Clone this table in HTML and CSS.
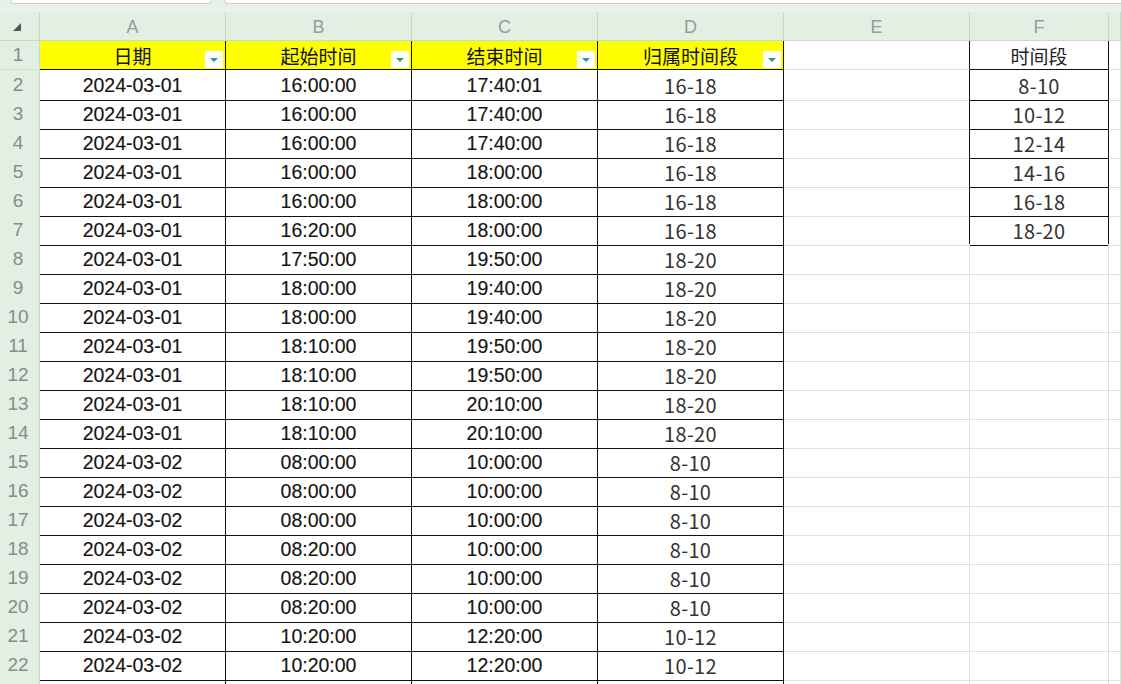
FILE: index.html
```html
<!DOCTYPE html>
<html lang="zh-CN">
<head>
	<meta charset="UTF-8">
	<title>时间段</title>
	<link rel="stylesheet" href="styles.css">
</head>
<body>
	<div id="sheet">
		<div class="top">
			<div class="tab"></div>
			<div class="tab wide"></div>
		</div>
		<div class="row head">
			<div class="corner"><svg width="8" height="8" viewBox="0 0 8 8"><path d="M8 0 L8 8 L0 8 Z" fill="#555"/></svg></div>
			<div class="col">A</div>
			<div class="col">B</div>
			<div class="col">C</div>
			<div class="col">D</div>
			<div class="col">E</div>
			<div class="col">F</div>
			<div class="col"></div>
		</div>
		<div class="row">
			<div class="rh">1</div>
			<div class="c k y">日期<span class="flt"></span></div>
			<div class="c k y">起始时间<span class="flt"></span></div>
			<div class="c k y">结束时间<span class="flt"></span></div>
			<div class="c k y">归属时间段<span class="flt"></span></div>
			<div class="c ek"></div>
			<div class="c k cn">时间段</div>
			<div class="c"></div>
		</div>
		<div class="row">
			<div class="rh">2</div>
			<div class="c k n">2024-03-01</div>
			<div class="c k n">16:00:00</div>
			<div class="c k n">17:40:01</div>
			<div class="c k g">16-18</div>
			<div class="c ek"></div>
			<div class="c k g">8-10</div>
			<div class="c"></div>
		</div>
		<div class="row">
			<div class="rh">3</div>
			<div class="c k n">2024-03-01</div>
			<div class="c k n">16:00:00</div>
			<div class="c k n">17:40:00</div>
			<div class="c k g">16-18</div>
			<div class="c ek"></div>
			<div class="c k g">10-12</div>
			<div class="c"></div>
		</div>
		<div class="row">
			<div class="rh">4</div>
			<div class="c k n">2024-03-01</div>
			<div class="c k n">16:00:00</div>
			<div class="c k n">17:40:00</div>
			<div class="c k g">16-18</div>
			<div class="c ek"></div>
			<div class="c k g">12-14</div>
			<div class="c"></div>
		</div>
		<div class="row">
			<div class="rh">5</div>
			<div class="c k n">2024-03-01</div>
			<div class="c k n">16:00:00</div>
			<div class="c k n">18:00:00</div>
			<div class="c k g">16-18</div>
			<div class="c ek"></div>
			<div class="c k g">14-16</div>
			<div class="c"></div>
		</div>
		<div class="row">
			<div class="rh">6</div>
			<div class="c k n">2024-03-01</div>
			<div class="c k n">16:00:00</div>
			<div class="c k n">18:00:00</div>
			<div class="c k g">16-18</div>
			<div class="c ek"></div>
			<div class="c k g">16-18</div>
			<div class="c"></div>
		</div>
		<div class="row">
			<div class="rh">7</div>
			<div class="c k n">2024-03-01</div>
			<div class="c k n">16:20:00</div>
			<div class="c k n">18:00:00</div>
			<div class="c k g">16-18</div>
			<div class="c ek"></div>
			<div class="c k g">18-20</div>
			<div class="c"></div>
		</div>
		<div class="row">
			<div class="rh">8</div>
			<div class="c k n">2024-03-01</div>
			<div class="c k n">17:50:00</div>
			<div class="c k n">19:50:00</div>
			<div class="c k g">18-20</div>
			<div class="c"></div>
			<div class="c"></div>
			<div class="c"></div>
		</div>
		<div class="row">
			<div class="rh">9</div>
			<div class="c k n">2024-03-01</div>
			<div class="c k n">18:00:00</div>
			<div class="c k n">19:40:00</div>
			<div class="c k g">18-20</div>
			<div class="c"></div>
			<div class="c"></div>
			<div class="c"></div>
		</div>
		<div class="row">
			<div class="rh">10</div>
			<div class="c k n">2024-03-01</div>
			<div class="c k n">18:00:00</div>
			<div class="c k n">19:40:00</div>
			<div class="c k g">18-20</div>
			<div class="c"></div>
			<div class="c"></div>
			<div class="c"></div>
		</div>
		<div class="row">
			<div class="rh">11</div>
			<div class="c k n">2024-03-01</div>
			<div class="c k n">18:10:00</div>
			<div class="c k n">19:50:00</div>
			<div class="c k g">18-20</div>
			<div class="c"></div>
			<div class="c"></div>
			<div class="c"></div>
		</div>
		<div class="row">
			<div class="rh">12</div>
			<div class="c k n">2024-03-01</div>
			<div class="c k n">18:10:00</div>
			<div class="c k n">19:50:00</div>
			<div class="c k g">18-20</div>
			<div class="c"></div>
			<div class="c"></div>
			<div class="c"></div>
		</div>
		<div class="row">
			<div class="rh">13</div>
			<div class="c k n">2024-03-01</div>
			<div class="c k n">18:10:00</div>
			<div class="c k n">20:10:00</div>
			<div class="c k g">18-20</div>
			<div class="c"></div>
			<div class="c"></div>
			<div class="c"></div>
		</div>
		<div class="row">
			<div class="rh">14</div>
			<div class="c k n">2024-03-01</div>
			<div class="c k n">18:10:00</div>
			<div class="c k n">20:10:00</div>
			<div class="c k g">18-20</div>
			<div class="c"></div>
			<div class="c"></div>
			<div class="c"></div>
		</div>
		<div class="row">
			<div class="rh">15</div>
			<div class="c k n">2024-03-02</div>
			<div class="c k n">08:00:00</div>
			<div class="c k n">10:00:00</div>
			<div class="c k g">8-10</div>
			<div class="c"></div>
			<div class="c"></div>
			<div class="c"></div>
		</div>
		<div class="row">
			<div class="rh">16</div>
			<div class="c k n">2024-03-02</div>
			<div class="c k n">08:00:00</div>
			<div class="c k n">10:00:00</div>
			<div class="c k g">8-10</div>
			<div class="c"></div>
			<div class="c"></div>
			<div class="c"></div>
		</div>
		<div class="row">
			<div class="rh">17</div>
			<div class="c k n">2024-03-02</div>
			<div class="c k n">08:00:00</div>
			<div class="c k n">10:00:00</div>
			<div class="c k g">8-10</div>
			<div class="c"></div>
			<div class="c"></div>
			<div class="c"></div>
		</div>
		<div class="row">
			<div class="rh">18</div>
			<div class="c k n">2024-03-02</div>
			<div class="c k n">08:20:00</div>
			<div class="c k n">10:00:00</div>
			<div class="c k g">8-10</div>
			<div class="c"></div>
			<div class="c"></div>
			<div class="c"></div>
		</div>
		<div class="row">
			<div class="rh">19</div>
			<div class="c k n">2024-03-02</div>
			<div class="c k n">08:20:00</div>
			<div class="c k n">10:00:00</div>
			<div class="c k g">8-10</div>
			<div class="c"></div>
			<div class="c"></div>
			<div class="c"></div>
		</div>
		<div class="row">
			<div class="rh">20</div>
			<div class="c k n">2024-03-02</div>
			<div class="c k n">08:20:00</div>
			<div class="c k n">10:00:00</div>
			<div class="c k g">8-10</div>
			<div class="c"></div>
			<div class="c"></div>
			<div class="c"></div>
		</div>
		<div class="row">
			<div class="rh">21</div>
			<div class="c k n">2024-03-02</div>
			<div class="c k n">10:20:00</div>
			<div class="c k n">12:20:00</div>
			<div class="c k g">10-12</div>
			<div class="c"></div>
			<div class="c"></div>
			<div class="c"></div>
		</div>
		<div class="row">
			<div class="rh">22</div>
			<div class="c k n">2024-03-02</div>
			<div class="c k n">10:20:00</div>
			<div class="c k n">12:20:00</div>
			<div class="c k g">10-12</div>
			<div class="c"></div>
			<div class="c"></div>
			<div class="c"></div>
		</div>
		<div class="row">
			<div class="rh"></div>
			<div class="c k"></div>
			<div class="c k"></div>
			<div class="c k"></div>
			<div class="c k"></div>
			<div class="c"></div>
			<div class="c"></div>
			<div class="c"></div>
		</div>
	</div>
</body>
</html>
```

FILE: styles.css
```css
html,body{
	margin: 0;
	padding: 0;
	background: #fff;
	overflow: hidden;
}
#sheet{
	width: 1121px;
	height: 684px;
	overflow: hidden;
}
.top{
	height: 12px;
	background: #e9f2e9;
	display: flex;
	gap: 12px;
}
.tab{
	width: 200px;
	height: 3px;
	margin-left: 10px;
	background: #fff;
	border: 1px solid #c9cfc9;
	border-top: none;
	border-radius: 0 0 6px 6px;
}
.tab.wide{
	flex: 1;
	margin-left: 0;
	border-right: none;
	border-radius: 0 0 0 6px;
}
.row{
	display: grid;
	grid-template-columns: 40px 186px 186px 186px 186px 186px 139px 1fr;
	height: 29px;
}
.head{
	background: #e2efe2;
}
.corner{
	display: flex;
	align-items: flex-end;
	justify-content: center;
	padding-bottom: 9px;
	padding-right: 6px;
	box-sizing: border-box;
	border-right: 1px solid #c6dbc6;
	border-bottom: 1px solid #c6dbc6;
}
.col{
	border-right: 1px solid #c6dbc6;
	border-bottom: 1px solid #c6dbc6;
	display: flex;
	align-items: center;
	justify-content: center;
	font-family: "Liberation Sans", Arial, sans-serif;
	font-size: 18px;
	color: #9a9a9a;
	padding-top: 2px;
	box-sizing: border-box;
}
.rh{
	background: #e2efe2;
	border-right: 1px solid #c6dbc6;
	border-bottom: 1px solid #cfe2cf;
	display: flex;
	align-items: center;
	justify-content: center;
	padding-right: 3px;
	box-sizing: border-box;
	font-family: "Liberation Sans", Arial, sans-serif;
	font-size: 19px;
	color: #8a8a8a;
}
.c{
	position: relative;
	border-right: 1px solid #d6e7d6;
	border-bottom: 1px solid #d6e7d6;
	display: flex;
	align-items: center;
	justify-content: center;
	box-sizing: border-box;
	white-space: nowrap;
}
.c.k{
	border-right-color: #111;
	border-bottom-color: #111;
}
.c.ek{
	border-right-color: #111;
}
.y{
	background: #ffff00;
	font-family: "Noto Sans CJK SC", sans-serif;
	font-size: 19px;
	color: #111;
}
.cn{
	font-family: "Noto Sans CJK SC", sans-serif;
	font-size: 19px;
	color: #222;
}
.n{
	font-family: "Liberation Sans", Arial, sans-serif;
	font-size: 19.5px;
	color: #151515;
	-webkit-text-stroke: 0.15px #151515;
	padding-top: 1px;
}
.g{
	font-family: "Noto Sans CJK SC", sans-serif;
	font-size: 20px;
	color: #333;
	padding-top: 1px;
	letter-spacing: 0.3px;
}
.flt{
	position: absolute;
	right: 2px;
	bottom: 1px;
	width: 18px;
	height: 17px;
	background: #fff;
	border-radius: 1px;
}
.flt::after{
	content: "";
	position: absolute;
	left: 5px;
	top: 7px;
	border-left: 4px solid transparent;
	border-right: 4px solid transparent;
	border-top: 4px solid #1ea186;
}
```
